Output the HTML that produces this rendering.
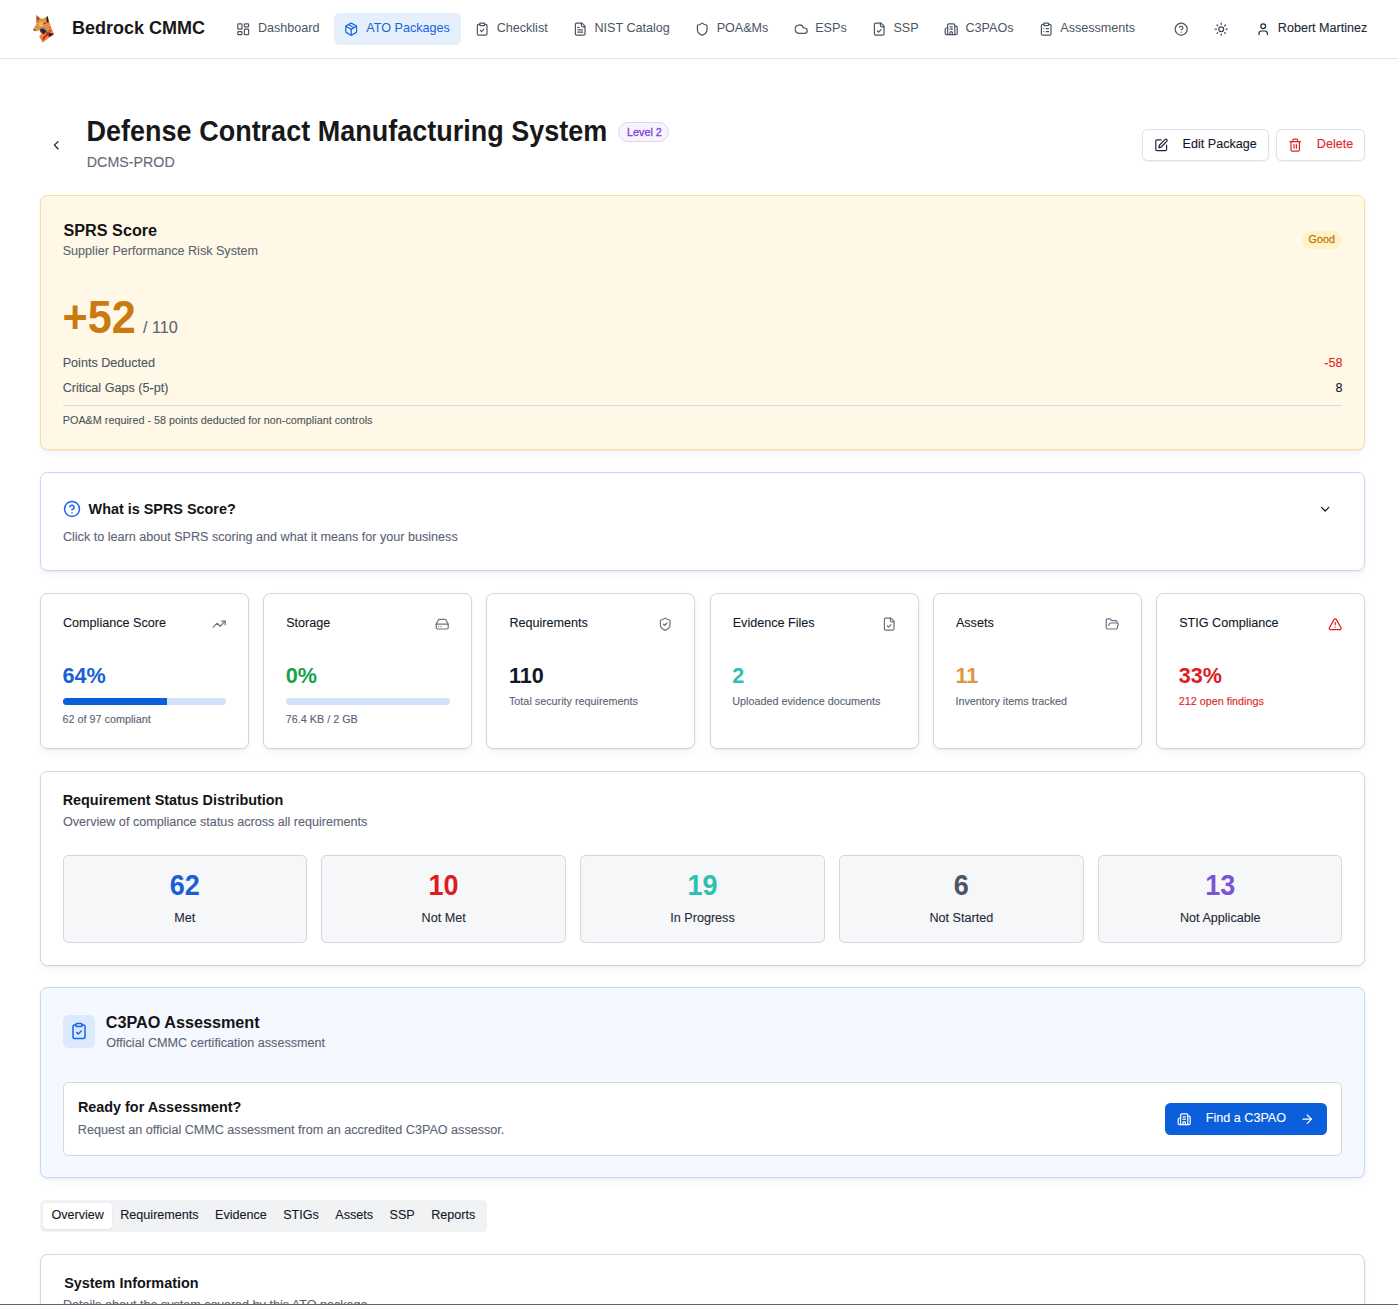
<!DOCTYPE html>
<html><head><meta charset="utf-8">
<style>
*{box-sizing:border-box;margin:0;padding:0}
html,body{width:1398px;height:1305px;overflow:hidden;background:#fff}
body{position:relative;font-family:"Liberation Sans",sans-serif;color:#111827}
.a{position:absolute}
.t{position:absolute;white-space:nowrap;line-height:1}
.t[style*="bold"]{transform:scaleY(1.06);transform-origin:0 84.7%}
.t:not([style*="bold"]),.ni span{-webkit-text-stroke:0.1px currentColor;transform:scaleY(1.07);transform-origin:0 84.7%}
.ni span{transform:none;-webkit-text-stroke:0}
.t[style*="font-size:10.8px"]{transform:scaleY(1.04)}
.t[style*="font-size:14.25px"]{transform:none}
svg.i{position:absolute;fill:none;stroke:currentColor;stroke-width:2;stroke-linecap:round;stroke-linejoin:round;overflow:visible}
.card{position:absolute;border:1px solid #d3d5dc;border-radius:7.4px;background:#fff;box-shadow:0 1px 2px rgba(16,24,40,.05),0 4px 9px rgba(16,24,40,.04)}
/* nav */
#nav{position:absolute;left:0;top:0;width:1398px;height:59px;border-bottom:1px solid #e3e5e9;background:#fff}
.ni{position:relative;display:flex;align-items:flex-start;gap:7.2px;padding:0 10.8px;height:32.4px;border-radius:5.4px;color:#4b5563;font-size:12.6px;line-height:1}
.ni svg{position:relative;margin-top:9px;flex:none}
.ni span{margin-top:8.6px;white-space:nowrap}
.ni.act{background:#e5f0fc;color:#1764dc}
.ni.act svg{left:-0.9px}
</style></head><body>

<!-- NAV -->
<div id="nav">
  <svg class="a" style="left:28px;top:12px" width="32" height="34" viewBox="0 0 32 34">
    <polygon points="8.1,3.1 12.5,6.5 15.6,6.6 19.8,3.9 20.8,8.6 22.9,14.6 26,21.9 23.5,24 14.6,30.7 11,24.2 13,22.6 12.2,19.6 11.7,18.6 7.8,19.4 4.9,17.7 6.5,15.1 8.6,11.7" fill="#dc9442"/>
    <polygon points="8.1,3.1 12.5,6.5 10.5,8.5 8.6,11.7" fill="#c87a35"/>
    <polygon points="9,4.5 11.5,6.8 9.5,9" fill="#9a4a20"/>
    <polygon points="9,12 14,9 17,11 12,14" fill="#eab066"/>
    <polygon points="18.4,5.4 19.8,4.2 20.8,10.4 18.8,10.6" fill="#241820"/>
    <polygon points="15.1,10.9 16.9,10.2 18.2,11.7 15.9,12.2" fill="#ec1a10"/>
    <polygon points="11.7,13.3 14.6,13 13.5,14.3" fill="#fff6e8"/>
    <polygon points="4.9,17.7 6.8,17.2 8.2,18.6 6.2,18.9" fill="#555566"/>
    <polygon points="6.2,18.9 11.7,18.4 12,19.4 8.5,19.9" fill="#f4f1ea"/>
    <polygon points="12,16.8 17.6,16.2 18.6,19.4 15.8,22.4 12.4,19.6" fill="#2c2948"/>
    <polygon points="15.6,16.4 17.6,16.2 18.4,18.4 16.4,17.8" fill="#9098ac"/>
    <polygon points="14.1,26 18.2,21.9 20,23.2 17.4,25.4 15.6,28.7" fill="#ee1c12"/>
    <polygon points="18.6,19.4 20.3,20.3 20.8,24.8 18.2,21.9" fill="#a43a1c"/>
    <polygon points="20.3,20.3 26,21.9 23.5,24 20.8,24.8" fill="#4a1420"/>
    <polygon points="21,15 22.5,15.4 22,16.6" fill="#ec1a10"/>
    <polygon points="20.6,18 23.2,18.2 22.8,19.6 20.8,19.4" fill="#ec1a10"/>
  </svg>
  <div class="t" style="left:72px;top:18.8px;font-size:18px;font-weight:bold;color:#18181b">Bedrock CMMC</div>

  <!-- nav items -->
  <div id="navl" style="position:absolute;left:225.55px;top:13px;display:flex;gap:3.6px">
  <div class="ni"><svg class="i"  width="14.4" height="14.4" viewBox="0 0 24 24"><rect width="7" height="9" x="3" y="3" rx="1"/><rect width="7" height="5" x="14" y="3" rx="1"/><rect width="7" height="9" x="14" y="12" rx="1"/><rect width="7" height="5" x="3" y="16" rx="1"/></svg><span>Dashboard</span></div>
  <div class="ni act"><svg class="i"  width="14.4" height="14.4" viewBox="0 0 24 24"><path d="M11 21.73a2 2 0 0 0 2 0l7-4A2 2 0 0 0 21 16V8a2 2 0 0 0-1-1.73l-7-4a2 2 0 0 0-2 0l-7 4A2 2 0 0 0 3 8v8a2 2 0 0 0 1 1.73z"/><path d="M12 22V12"/><path d="m3.3 7 7.703 4.734a2 2 0 0 0 1.994 0L20.7 7"/><path d="m7.5 4.27 9 5.15"/></svg><span>ATO Packages</span></div>
  <div class="ni"><svg class="i"  width="14.4" height="14.4" viewBox="0 0 24 24"><rect width="8" height="4" x="8" y="2" rx="1" ry="1"/><path d="M16 4h2a2 2 0 0 1 2 2v14a2 2 0 0 1-2 2H6a2 2 0 0 1-2-2V6a2 2 0 0 1 2-2h2"/><path d="m9 14 2 2 4-4"/></svg><span>Checklist</span></div>
  <div class="ni"><svg class="i"  width="14.4" height="14.4" viewBox="0 0 24 24"><path d="M15 2H6a2 2 0 0 0-2 2v16a2 2 0 0 0 2 2h12a2 2 0 0 0 2-2V7Z"/><path d="M14 2v4a2 2 0 0 0 2 2h4"/><path d="M10 9H8"/><path d="M16 13H8"/><path d="M16 17H8"/></svg><span>NIST Catalog</span></div>
  <div class="ni"><svg class="i"  width="14.4" height="14.4" viewBox="0 0 24 24"><path d="M20 13c0 5-3.5 7.5-7.66 8.95a1 1 0 0 1-.67-.01C7.5 20.5 4 18 4 13V6a1 1 0 0 1 1-1c2 0 4.5-1.2 6.24-2.72a1.17 1.17 0 0 1 1.52 0C14.51 3.81 17 5 19 5a1 1 0 0 1 1 1z"/></svg><span>POA&amp;Ms</span></div>
  <div class="ni"><svg class="i"  width="14.4" height="14.4" viewBox="0 0 24 24"><path d="M17.5 19H9a7 7 0 1 1 6.71-9h1.79a4.5 4.5 0 1 1 0 9Z"/></svg><span>ESPs</span></div>
  <div class="ni"><svg class="i"  width="14.4" height="14.4" viewBox="0 0 24 24"><path d="M15 2H6a2 2 0 0 0-2 2v16a2 2 0 0 0 2 2h12a2 2 0 0 0 2-2V7Z"/><path d="M14 2v4a2 2 0 0 0 2 2h4"/><path d="m9 15 2 2 4-4"/></svg><span>SSP</span></div>
  <div class="ni"><svg class="i"  width="14.4" height="14.4" viewBox="0 0 24 24"><path d="M10 12h4"/><path d="M10 8h4"/><path d="M14 21v-3a2 2 0 0 0-4 0v3"/><path d="M6 10H4a2 2 0 0 0-2 2v7a2 2 0 0 0 2 2h16a2 2 0 0 0 2-2V9a2 2 0 0 0-2-2h-2"/><path d="M6 21V5a2 2 0 0 1 2-2h8a2 2 0 0 1 2 2v16"/></svg><span>C3PAOs</span></div>
  <div class="ni"><svg class="i"  width="14.4" height="14.4" viewBox="0 0 24 24"><rect width="8" height="4" x="8" y="2" rx="1" ry="1"/><path d="M16 4h2a2 2 0 0 1 2 2v14a2 2 0 0 1-2 2H6a2 2 0 0 1-2-2V6a2 2 0 0 1 2-2h2"/><path d="M12 11h4"/><path d="M12 16h4"/><path d="M8 11h.01"/><path d="M8 16h.01"/></svg><span>Assessments</span></div>
  </div>
  <svg class="i" style="left:1174.1px;top:21.8px;color:#4b5563" width="14.4" height="14.4" viewBox="0 0 24 24"><circle cx="12" cy="12" r="10"/><path d="M9.09 9a3 3 0 0 1 5.83 1c0 2-3 3-3 3"/><path d="M12 17h.01"/></svg>
  <svg class="i" style="left:1213.9px;top:21.8px;color:#374151" width="14.4" height="14.4" viewBox="0 0 24 24"><circle cx="12" cy="12" r="4"/><path d="M12 2v2"/><path d="M12 20v2"/><path d="m4.93 4.93 1.41 1.41"/><path d="m17.66 17.66 1.41 1.41"/><path d="M2 12h2"/><path d="M20 12h2"/><path d="m6.34 17.66-1.41 1.41"/><path d="m19.07 4.93-1.41 1.41"/></svg>
  <svg class="i" style="left:1255.8px;top:21.8px;color:#1f2937" width="14.4" height="14.4" viewBox="0 0 24 24"><path d="M19 21v-2a4 4 0 0 0-4-4H9a4 4 0 0 0-4 4v2"/><circle cx="12" cy="7" r="4"/></svg>
  <div class="t" style="left:1277.8px;top:21.5px;font-size:12.6px;color:#1f2937">Robert Martinez</div>
</div>

<!-- PAGE HEADER -->
<svg class="i" style="left:49.3px;top:137.8px;color:#111827" width="14.4" height="14.4" viewBox="0 0 24 24"><path d="m15 18-6-6 6-6"/></svg>
<div class="t" style="left:86.6px;top:119px;font-size:27px;font-weight:bold;color:#18181b">Defense Contract Manufacturing System</div>
<div class="a" style="left:618px;top:122px;width:51px;height:19.6px;border:1px solid #e6cdfa;border-radius:10px;background:#f8f4fd"></div>
<div class="t" style="left:627px;top:127px;font-size:10.8px;color:#7a3fdc;-webkit-text-stroke:0.3px currentColor">Level 2</div>
<div class="t" style="left:86.8px;top:154.9px;font-size:14.25px;color:#646b78">DCMS-PROD</div>

<div class="a" style="left:1142px;top:129px;width:126.6px;height:32.4px;border:1px solid #dfe1e6;border-radius:5.4px;background:#fff;box-shadow:0 1px 2px rgba(0,0,0,.05)"></div>
<svg class="i" style="left:1153.7px;top:137.8px;color:#1f2937" width="14.4" height="14.4" viewBox="0 0 24 24"><path d="M12 3H5a2 2 0 0 0-2 2v14a2 2 0 0 0 2 2h14a2 2 0 0 0 2-2v-7"/><path d="M18.375 2.625a1 1 0 0 1 3 3l-9.013 9.014a2 2 0 0 1-.853.505l-2.873.84a.5.5 0 0 1-.62-.62l.84-2.873a2 2 0 0 1 .506-.852z"/></svg>
<div class="t" style="left:1182.6px;top:137.5px;font-size:12.6px;color:#111827">Edit Package</div>
<div class="a" style="left:1276px;top:129px;width:89px;height:32.4px;border:1px solid #dfe1e6;border-radius:5.4px;background:#fff;box-shadow:0 1px 2px rgba(0,0,0,.05)"></div>
<svg class="i" style="left:1288px;top:137.8px;color:#dc2626" width="14.4" height="14.4" viewBox="0 0 24 24"><path d="M3 6h18"/><path d="M19 6v14c0 1-1 2-2 2H7c-1 0-2-1-2-2V6"/><path d="M8 6V4c0-1 1-2 2-2h4c1 0 2 1 2 2v2"/><line x1="10" x2="10" y1="11" y2="17"/><line x1="14" x2="14" y1="11" y2="17"/></svg>
<div class="t" style="left:1316.8px;top:137.5px;font-size:12.6px;color:#dc2626">Delete</div>

<!-- SPRS CARD -->
<div class="card" style="left:40px;top:195px;width:1325px;height:255px;background:#fff8e6;border-color:#f8de9e"></div>
<div class="t" style="left:63.5px;top:222px;font-size:16.2px;font-weight:bold;color:#141416">SPRS Score</div>
<div class="t" style="left:62.7px;top:244.8px;font-size:12.6px;color:#5b6474">Supplier Performance Risk System</div>
<div class="a" style="left:1302px;top:231px;width:40px;height:18px;border-radius:9px;background:#fcf3c6"></div>
<div class="t" style="left:1308.5px;top:234px;font-size:10.8px;color:#c8760f;-webkit-text-stroke:0.25px currentColor">Good</div>
<div class="t" style="left:62.6px;top:297px;font-size:43.2px;font-weight:bold;color:#c97a10;transform:scaleY(1.065);transform-origin:0 35px">+52</div>
<div class="t" style="left:143px;top:319.4px;font-size:16.2px;color:#5b6474">/ 110</div>
<div class="t" style="left:62.7px;top:356.5px;font-size:12.6px;color:#4b5563">Points Deducted</div>
<div class="t" style="left:62.7px;top:381.5px;font-size:12.6px;color:#4b5563">Critical Gaps (5-pt)</div>
<div class="t" style="right:55.5px;top:356.5px;font-size:12.6px;color:#dc2626">-58</div>
<div class="t" style="right:55.5px;top:381.5px;font-size:12.6px;color:#111827">8</div>
<div class="a" style="left:63px;top:405px;width:1279px;height:1px;background:#d7d9dc"></div>
<div class="t" style="left:62.8px;top:415px;font-size:10.8px;color:#4b5563">POA&amp;M required - 58 points deducted for non-compliant controls</div>

<!--MORE-->
<div class="card" style="left:40px;top:472px;width:1325px;height:98.5px;border-color:#bfd9fa"></div>
<svg class="i" style="left:63.00px;top:500.00px;color:#2563eb" width="18" height="18" viewBox="0 0 24 24" stroke-width="2"><circle cx="12" cy="12" r="10"/><path d="M9.09 9a3 3 0 0 1 5.83 1c0 2-3 3-3 3"/><path d="M12 17h.01"/></svg>
<div class="t" style="left:88.60px;top:501.70px;font-size:14.4px;font-weight:bold;color:#141416;">What is SPRS Score?</div>
<div class="t" style="left:62.90px;top:531.00px;font-size:12.6px;color:#5b6474;">Click to learn about SPRS scoring and what it means for your business</div>
<svg class="i" style="left:1318.00px;top:501.80px;color:#111827" width="14.4" height="14.4" viewBox="0 0 24 24" stroke-width="2"><path d="m6 9 6 6 6-6"/></svg>
<div class="card" style="left:40.00px;top:593px;width:208.83px;height:155.5px"></div>
<div class="t" style="left:63.00px;top:616.50px;font-size:12.6px;color:#111827;">Compliance Score</div>
<svg class="i" style="left:211.93px;top:616.70px;color:#6b7280" width="14.4" height="14.4" viewBox="0 0 24 24" stroke-width="2"><polyline points="22 7 13.5 15.5 8.5 10.5 2 17"/><polyline points="16 7 22 7 22 13"/></svg>
<div class="t" style="left:62.50px;top:665.00px;font-size:21.6px;font-weight:bold;color:#1a5fd6;">64%</div>
<div class="a" style="left:62.50px;top:697.8px;width:163.83px;height:7.2px;border-radius:4px;background:#d3e2f8;overflow:hidden"><div style="width:104.85px;height:100%;background:#0b5fdb"></div></div>
<div class="t" style="left:62.50px;top:714.00px;font-size:10.8px;color:#596170;">62 of 97 compliant</div>
<div class="card" style="left:263.23px;top:593px;width:208.83px;height:155.5px"></div>
<div class="t" style="left:286.23px;top:616.50px;font-size:12.6px;color:#111827;">Storage</div>
<svg class="i" style="left:435.17px;top:616.70px;color:#6b7280" width="14.4" height="14.4" viewBox="0 0 24 24" stroke-width="2"><line x1="22" x2="2" y1="12" y2="12"/><path d="M5.45 5.11 2 12v6a2 2 0 0 0 2 2h16a2 2 0 0 0 2-2v-6l-3.45-6.89A2 2 0 0 0 16.76 4H7.24a2 2 0 0 0-1.79 1.11z"/><line x1="6" x2="6.01" y1="16" y2="16"/><line x1="10" x2="10.01" y1="16" y2="16"/></svg>
<div class="t" style="left:285.73px;top:665.00px;font-size:21.6px;font-weight:bold;color:#16a34a;">0%</div>
<div class="a" style="left:285.73px;top:697.8px;width:163.83px;height:7.2px;border-radius:4px;background:#d3e2f8;overflow:hidden"><div style="width:0.00px;height:100%;background:#0b5fdb"></div></div>
<div class="t" style="left:285.73px;top:714.00px;font-size:10.8px;color:#596170;">76.4 KB / 2 GB</div>
<div class="card" style="left:486.47px;top:593px;width:208.83px;height:155.5px"></div>
<div class="t" style="left:509.47px;top:616.50px;font-size:12.6px;color:#111827;">Requirements</div>
<svg class="i" style="left:658.40px;top:616.70px;color:#6b7280" width="14.4" height="14.4" viewBox="0 0 24 24" stroke-width="2"><path d="M20 13c0 5-3.5 7.5-7.66 8.95a1 1 0 0 1-.67-.01C7.5 20.5 4 18 4 13V6a1 1 0 0 1 1-1c2 0 4.5-1.2 6.24-2.72a1.17 1.17 0 0 1 1.52 0C14.51 3.81 17 5 19 5a1 1 0 0 1 1 1z"/><path d="m9 12 2 2 4-4"/></svg>
<div class="t" style="left:508.97px;top:665.00px;font-size:21.6px;font-weight:bold;color:#111827;">110</div>
<div class="t" style="left:508.97px;top:696.00px;font-size:10.8px;color:#596170;">Total security requirements</div>
<div class="card" style="left:709.70px;top:593px;width:208.83px;height:155.5px"></div>
<div class="t" style="left:732.70px;top:616.50px;font-size:12.6px;color:#111827;">Evidence Files</div>
<svg class="i" style="left:881.63px;top:616.70px;color:#6b7280" width="14.4" height="14.4" viewBox="0 0 24 24" stroke-width="2"><path d="M15 2H6a2 2 0 0 0-2 2v16a2 2 0 0 0 2 2h12a2 2 0 0 0 2-2V7Z"/><path d="M14 2v4a2 2 0 0 0 2 2h4"/><path d="m9 15 2 2 4-4"/></svg>
<div class="t" style="left:732.20px;top:665.00px;font-size:21.6px;font-weight:bold;color:#2fc1b0;">2</div>
<div class="t" style="left:732.20px;top:696.00px;font-size:10.8px;color:#596170;">Uploaded evidence documents</div>
<div class="card" style="left:932.93px;top:593px;width:208.83px;height:155.5px"></div>
<div class="t" style="left:955.93px;top:616.50px;font-size:12.6px;color:#111827;">Assets</div>
<svg class="i" style="left:1104.87px;top:616.70px;color:#6b7280" width="14.4" height="14.4" viewBox="0 0 24 24" stroke-width="2"><path d="m6 14 1.5-2.9A2 2 0 0 1 9.24 10H20a2 2 0 0 1 1.94 2.5l-1.54 6a2 2 0 0 1-1.95 1.5H4a2 2 0 0 1-2-2V5a2 2 0 0 1 2-2h3.9a2 2 0 0 1 1.69.9l.81 1.2a2 2 0 0 0 1.67.9H18a2 2 0 0 1 2 2v2"/></svg>
<div class="t" style="left:955.43px;top:665.00px;font-size:21.6px;font-weight:bold;color:#e0963a;">11</div>
<div class="t" style="left:955.43px;top:696.00px;font-size:10.8px;color:#596170;">Inventory items tracked</div>
<div class="card" style="left:1156.17px;top:593px;width:208.83px;height:155.5px"></div>
<div class="t" style="left:1179.17px;top:616.50px;font-size:12.6px;color:#111827;">STIG Compliance</div>
<svg class="i" style="left:1328.10px;top:616.70px;color:#de1b22" width="14.4" height="14.4" viewBox="0 0 24 24" stroke-width="2"><path d="m21.73 18-8-14a2 2 0 0 0-3.48 0l-8 14A2 2 0 0 0 4 21h16a2 2 0 0 0 1.73-3"/><path d="M12 9v4"/><path d="M12 17h.01"/></svg>
<div class="t" style="left:1178.67px;top:665.00px;font-size:21.6px;font-weight:bold;color:#de1b22;">33%</div>
<div class="t" style="left:1178.67px;top:696.00px;font-size:10.8px;color:#de1b22;">212 open findings</div>
<div class="card" style="left:40px;top:771px;width:1325px;height:194.5px"></div>
<div class="t" style="left:62.70px;top:793.00px;font-size:14.4px;font-weight:bold;color:#141416;">Requirement Status Distribution</div>
<div class="t" style="left:62.90px;top:816.00px;font-size:12.6px;color:#5b6474;">Overview of compliance status across all requirements</div>
<div class="a" style="left:62.50px;top:855px;width:244.48px;height:87.5px;border:1px solid #d3d5dc;border-radius:5.4px;background:#f6f7f9"></div>
<div class="t" style="left:62.50px;width:244.48px;text-align:center;top:873px;font-size:27px;font-weight:bold;color:#1a5fd6">62</div>
<div class="t" style="left:62.50px;width:244.48px;text-align:center;top:912px;font-size:12.6px;color:#1f2937">Met</div>
<div class="a" style="left:321.38px;top:855px;width:244.48px;height:87.5px;border:1px solid #d3d5dc;border-radius:5.4px;background:#f6f7f9"></div>
<div class="t" style="left:321.38px;width:244.48px;text-align:center;top:873px;font-size:27px;font-weight:bold;color:#de1b22">10</div>
<div class="t" style="left:321.38px;width:244.48px;text-align:center;top:912px;font-size:12.6px;color:#1f2937">Not Met</div>
<div class="a" style="left:580.26px;top:855px;width:244.48px;height:87.5px;border:1px solid #d3d5dc;border-radius:5.4px;background:#f6f7f9"></div>
<div class="t" style="left:580.26px;width:244.48px;text-align:center;top:873px;font-size:27px;font-weight:bold;color:#2fc1b0">19</div>
<div class="t" style="left:580.26px;width:244.48px;text-align:center;top:912px;font-size:12.6px;color:#1f2937">In Progress</div>
<div class="a" style="left:839.14px;top:855px;width:244.48px;height:87.5px;border:1px solid #d3d5dc;border-radius:5.4px;background:#f6f7f9"></div>
<div class="t" style="left:839.14px;width:244.48px;text-align:center;top:873px;font-size:27px;font-weight:bold;color:#4b5563">6</div>
<div class="t" style="left:839.14px;width:244.48px;text-align:center;top:912px;font-size:12.6px;color:#1f2937">Not Started</div>
<div class="a" style="left:1098.02px;top:855px;width:244.48px;height:87.5px;border:1px solid #d3d5dc;border-radius:5.4px;background:#f6f7f9"></div>
<div class="t" style="left:1098.02px;width:244.48px;text-align:center;top:873px;font-size:27px;font-weight:bold;color:#7b55d4">13</div>
<div class="t" style="left:1098.02px;width:244.48px;text-align:center;top:912px;font-size:12.6px;color:#1f2937">Not Applicable</div>
<div class="card" style="left:40px;top:987px;width:1325px;height:190.5px;background:#f5f8fe;border-color:#bfd9fa"></div>
<div class="a" style="left:63px;top:1015px;width:32px;height:33px;border-radius:5.4px;background:#dde9fc"></div>
<svg class="i" style="left:69.80px;top:1022.00px;color:#1764e6" width="18" height="18" viewBox="0 0 24 24" stroke-width="2"><rect width="8" height="4" x="8" y="2" rx="1" ry="1"/><path d="M16 4h2a2 2 0 0 1 2 2v14a2 2 0 0 1-2 2H6a2 2 0 0 1-2-2V6a2 2 0 0 1 2-2h2"/><path d="m9 14 2 2 4-4"/></svg>
<div class="t" style="left:105.80px;top:1014.00px;font-size:16.2px;font-weight:bold;color:#141416;">C3PAO Assessment</div>
<div class="t" style="left:106.20px;top:1036.70px;font-size:12.6px;color:#5b6474;">Official CMMC certification assessment</div>
<div class="a" style="left:63px;top:1082px;width:1279px;height:73.5px;border:1px solid #d3d6dc;border-radius:5.4px;background:#fff"></div>
<div class="t" style="left:77.90px;top:1100.00px;font-size:14.4px;font-weight:bold;color:#141416;">Ready for Assessment?</div>
<div class="t" style="left:77.80px;top:1123.50px;font-size:12.6px;color:#5b6474;">Request an official CMMC assessment from an accredited C3PAO assessor.</div>
<div class="a" style="left:1165px;top:1103px;width:162px;height:32px;border-radius:5.4px;background:#0b5fdb"></div>
<svg class="i" style="left:1176.60px;top:1111.80px;color:#ffffff" width="14.4" height="14.4" viewBox="0 0 24 24" stroke-width="2"><path d="M10 12h4"/><path d="M10 8h4"/><path d="M14 21v-3a2 2 0 0 0-4 0v3"/><path d="M6 10H4a2 2 0 0 0-2 2v7a2 2 0 0 0 2 2h16a2 2 0 0 0 2-2V9a2 2 0 0 0-2-2h-2"/><path d="M6 21V5a2 2 0 0 1 2-2h8a2 2 0 0 1 2 2v16"/></svg>
<div class="t" style="left:1205.80px;top:1112.00px;font-size:12.6px;color:#ffffff;">Find a C3PAO</div>
<svg class="i" style="left:1300.10px;top:1111.80px;color:#ffffff" width="14.4" height="14.4" viewBox="0 0 24 24" stroke-width="2"><path d="M5 12h14"/><path d="m12 5 7 7-7 7"/></svg>
<div class="a" style="left:40px;top:1200px;width:446.5px;height:31.6px;border-radius:5.4px;background:#f1f2f4"></div>
<div class="a" style="left:43.2px;top:1203.2px;width:68.7px;height:25.6px;border-radius:4px;background:#fff;box-shadow:0 1px 2px rgba(0,0,0,.08)"></div>
<div class="t" style="left:51.40px;top:1209.00px;font-size:12.6px;color:#111827;">Overview</div>
<div class="t" style="left:120.27px;top:1209.00px;font-size:12.6px;color:#111827;">Requirements</div>
<div class="t" style="left:215.03px;top:1209.00px;font-size:12.6px;color:#111827;">Evidence</div>
<div class="t" style="left:283.22px;top:1209.00px;font-size:12.6px;color:#111827;">STIGs</div>
<div class="t" style="left:335.31px;top:1209.00px;font-size:12.6px;color:#111827;">Assets</div>
<div class="t" style="left:389.51px;top:1209.00px;font-size:12.6px;color:#111827;">SSP</div>
<div class="t" style="left:431.13px;top:1209.00px;font-size:12.6px;color:#111827;">Reports</div>
<div class="card" style="left:40px;top:1254px;width:1325px;height:200px"></div>
<div class="t" style="left:64.20px;top:1276.00px;font-size:14.4px;font-weight:bold;color:#141416;">System Information</div>
<div class="t" style="left:62.90px;top:1298.50px;font-size:12.6px;color:#5b6474;">Details about the system covered by this ATO package</div>
<!--/MORE--><!--/MORE--><!--/MORE--><!--/MORE--><!--/MORE--><!--/MORE--><!--/MORE--><!--/MORE--><!--/MORE--><!--/MORE--><!--/MORE--><!--/MORE--><!--/MORE-->

<div class="a" style="left:0;top:1304px;width:1398px;height:1px;background:#64626a"></div>
</body></html>
